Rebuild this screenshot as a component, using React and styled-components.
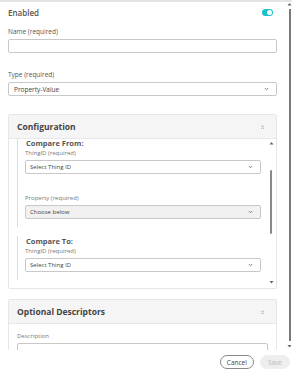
import React from 'react';
import styled, { createGlobalStyle } from 'styled-components';

const GlobalStyle = createGlobalStyle`
    html, body { margin: 0; padding: 0; background: #fff; }
    body { font-family: "Open Sans", "Liberation Sans", sans-serif; color: #555; }
`;

const Chevron = ({ up }) => (
    <svg width="5" height="4" viewBox="0 0 5 4">
        <path d={up ? "M0.8 3 L2.5 1.2 L4.2 3" : "M0.8 1 L2.5 2.8 L4.2 1"} fill="none" stroke="#777" strokeWidth="0.9" />
    </svg>
);

const DoubleUp = () => (
    <svg width="5" height="6" viewBox="0 0 5 6">
        <path d="M1 3 L2.5 1.5 L4 3 M1 5 L2.5 3.5 L4 5" fill="none" stroke="#aaa" strokeWidth="0.8" />
    </svg>
);

const Arrow = ({ down }) => (
    <svg width="5" height="4" viewBox="0 0 5 4">
        <path d={down ? "M0.5 1 L4.5 1 L2.5 3.5 Z" : "M0.5 3.5 L4.5 3.5 L2.5 1 Z"} fill="#666" />
    </svg>
);

const App = () => (
    <Page>
        <GlobalStyle />
        <Viewport>
            <Content>
                <EnabledRow>
                    <Title>Enabled</Title>
                    <Toggle><Knob /></Toggle>
                </EnabledRow>
                <Label top={9}>Name (required)</Label>
                <Input />
                <Label top={17}>Type (required)</Label>
                <Select>Property-Value<Chevron /></Select>

                <Panel top={18}>
                    <PanelHeader>Configuration<DoubleUp /></PanelHeader>
                    <InnerBody>
                        <InnerScroll>
                            <Group>
                                <GroupTitle>Compare From:</GroupTitle>
                                <SmallLabel>ThingID (required)</SmallLabel>
                                <Select inner>Select Thing ID<Chevron /></Select>
                                <SmallLabel top={19}>Property (required)</SmallLabel>
                                <Select inner disabled>Choose below<Chevron /></Select>
                            </Group>
                            <Group gap>
                                <GroupTitle>Compare To:</GroupTitle>
                                <SmallLabel>ThingID (required)</SmallLabel>
                                <Select inner>Select Thing ID<Chevron /></Select>
                            </Group>
                        </InnerScroll>
                        <InnerBar>
                            <Arrow />
                            <Track><Thumb /></Track>
                            <Arrow down />
                        </InnerBar>
                    </InnerBody>
                </Panel>

                <Panel top={10}>
                    <PanelHeader>Optional Descriptors<DoubleUp /></PanelHeader>
                    <PanelBody>
                        <SmallLabel top={7}>Description</SmallLabel>
                        <TextArea />
                    </PanelBody>
                </Panel>
            </Content>
            <OuterBar>
                <Arrow />
                <OuterThumb />
                <Arrow down />
            </OuterBar>
        </Viewport>
        <Footer>
            <Button>Cancel</Button>
            <Button primary>Save</Button>
        </Footer>
    </Page>
);

export default App;

const Page = styled.div`
    width: 292px;
    height: 375px;
    display: flex;
    flex-direction: column;
    border-top: 2px solid #e4e4e4;
    box-sizing: border-box;
    overflow: hidden;
`

const Viewport = styled.div`
    height: 348px;
    display: flex;
    overflow: hidden;
`

const Content = styled.div`
    flex: 1;
    padding: 4px 10px 0 8px;
    overflow: hidden;
`

const EnabledRow = styled.div`
    display: flex;
    justify-content: space-between;
    align-items: center;
    height: 12px;
    padding-right: 4px;
`

const Title = styled.span`
    font-size: 8px;
    font-weight: 600;
    color: #555;
`

const Toggle = styled.div`
    width: 11px;
    height: 7px;
    border-radius: 4px;
    background: #1cc0cc;
    display: flex;
    align-items: center;
    justify-content: flex-end;
    padding: 0 1px;
    box-sizing: border-box;
`

const Knob = styled.div`
    width: 5px;
    height: 5px;
    border-radius: 50%;
    background: #fff;
`

const Label = styled.div`
    font-size: 6.5px;
    line-height: 10px;
    margin-top: ${p => p.top || 0}px;
    color: #555;
`

const SmallLabel = styled(Label)`
    font-size: 6px;
    color: #777;
`

const Input = styled.div`
    height: 14px;
    margin-top: 2px;
    border: 1px solid #c8c8c8;
    border-radius: 2px;
    box-sizing: border-box;
`

const Select = styled.div`
    height: 14px;
    margin-top: 2px;
    border: 1px solid #c8c8c8;
    border-radius: 2px;
    box-sizing: border-box;
    display: flex;
    align-items: center;
    justify-content: space-between;
    padding: 0 7px 0 ${p => (p.inner ? 4 : 5)}px;
    font-size: ${p => (p.inner ? 6 : 6.5)}px;
    color: #444;
    background: ${p => (p.disabled ? '#f1f1f1' : '#fff')};
`

const Panel = styled.div`
    margin-top: ${p => p.top}px;
    border: 1px solid #e6e6e6;
    border-radius: 2px;
`

const PanelHeader = styled.div`
    height: 23px;
    background: #f5f5f5;
    border-bottom: 1px solid #e8e8e8;
    display: flex;
    align-items: center;
    justify-content: space-between;
    padding: 0 11px 0 8px;
    font-size: 8.5px;
    font-weight: 700;
    color: #444;
`

const InnerBody = styled.div`
    height: 149px;
    display: flex;
    padding-left: 8px;
    overflow: hidden;
`

const InnerScroll = styled.div`
    flex: 1;
    margin-top: -1px;
    padding-right: 7px;
`

const Group = styled.div`
    border-left: 1px solid #dcdcdc;
    padding: 0 0 8px 7px;
    margin-top: ${p => (p.gap ? 9 : 0)}px;
`

const GroupTitle = styled.div`
    font-size: 7.5px;
    line-height: 10px;
    font-weight: 700;
    color: #555;
    padding-left: 1px;
`

const InnerBar = styled.div`
    width: 6px;
    display: flex;
    flex-direction: column;
    align-items: center;
    padding: 2px 2px 4px 0;
`

const Track = styled.div`
    flex: 1;
    display: flex;
    flex-direction: column;
    padding-top: 25px;
`

const Thumb = styled.div`
    width: 2px;
    height: 64px;
    background: #8a8a8a;
    border-radius: 1px;
`

const PanelBody = styled.div`
    padding: 0 8px 0 8px;
`

const TextArea = styled.div`
    height: 20px;
    margin-top: 2px;
    border: 1px solid #c8c8c8;
    border-radius: 2px;
`

const OuterBar = styled.div`
    width: 5px;
    display: flex;
    flex-direction: column;
    align-items: center;
    padding: 0 0 2px 0;
`

const OuterThumb = styled.div`
    flex: 1;
    width: 2px;
    margin: 3px 0;
    background: #7a7a7a;
`

const Footer = styled.div`
    flex: 1;
    display: flex;
    justify-content: flex-end;
    align-items: flex-start;
    gap: 6px;
    padding: 5px 2px 0 0;
`

const Button = styled.div`
    height: 14px;
    padding: 0 ${p => (p.primary ? 7 : 6)}px;
    border-radius: 8px;
    box-sizing: border-box;
    display: flex;
    align-items: center;
    font-size: 6.5px;
    border: 1px solid ${p => (p.primary ? '#eee' : '#8a8a8a')};
    background: ${p => (p.primary ? '#eee' : '#fff')};
    color: ${p => (p.primary ? '#bbb' : '#444')};
`
